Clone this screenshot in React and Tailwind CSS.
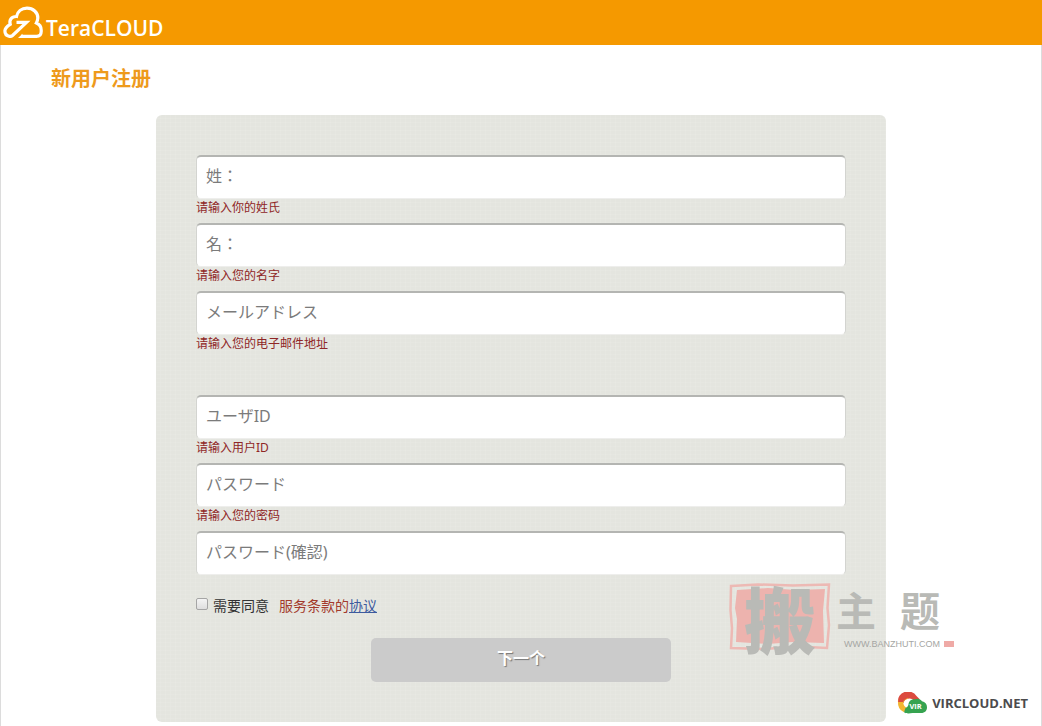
import React from "react";

const nameFields = [
  { id: "last-name", type: "text", label: "姓：", hint: "请输入你的姓氏" },
  { id: "first-name", type: "text", label: "名：", hint: "请输入您的名字" },
  { id: "email", type: "email", label: "メールアドレス", hint: "请输入您的电子邮件地址" },
];

const accountFields = [
  { id: "user-id", type: "text", label: "ユーザID", hint: "请输入用户ID" },
  { id: "password", type: "password", label: "パスワード", hint: "请输入您的密码" },
  { id: "password-confirm", type: "password", label: "パスワード(確認)" },
];

function Field({ id, type, label, hint }) {
  return (
    <div>
      <input
        id={id}
        type={type}
        lang="zh-TW"
        placeholder={label}
        aria-label={label}
        aria-describedby={hint ? id + "-hint" : undefined}
        className="block h-11 w-full rounded-[5px] border border-t-2 border-[#d3d4d0] border-t-[#b4b5b2] border-b-[#eeeeec] bg-white px-[9px] pb-[3px] font-['Noto_Sans','Noto_Sans_CJK_JP',sans-serif] text-base text-[#444] outline-none placeholder:text-[#7b7b7b]"
      />
      {hint && (
        <p id={id + "-hint"} className="h-6 text-xs leading-[18px] text-[#8f2626]">
          {hint}
        </p>
      )}
    </div>
  );
}

function CloudMark() {
  return (
    <svg viewBox="0 0 40 34" className="h-[34px] w-10" fill="none" stroke="#fff" strokeWidth="3.2" aria-hidden="true">
      <path d="M13.500 16.300H23.500L9.500 29.500C8.500 30.400 7.500 30.500 6.500 30.300C3.500 29.800 1.800 27.500 1.900 24.800C2 22 4 20.300 7.200 18.300C6 14 8.500 10.300 13.500 10.500C14.500 5.500 18.500 2.100 24 2.100C30 2.100 35 6.500 34.800 12C34.700 14 34.200 15.500 33.400 17C36.500 18.300 38.200 20.800 38.200 24V25.500C38.200 28.500 36.500 30.400 33.500 30.400H18" />
      <path d="M15 32L19.500 27.800V32Z" fill="#fff" stroke="none" />
    </svg>
  );
}

function VirMark() {
  return (
    <svg viewBox="0 0 31 22" className="h-[22px] w-[31px]" aria-hidden="true">
      <path d="M1 10A10 9.500 0 0 1 19.500 4L23 7.500L17 8.500A6 5.500 0 0 0 6.500 11Z" fill="#dc4b3f" />
      <path d="M1 10A10.500 10.500 0 0 0 7 20.300L10.500 16A6 6 0 0 1 6.300 11C6.500 8.500 9 6.500 11.500 7L9 4.500C4 5 1.500 7 1 10Z" fill="#f2b632" />
      <path d="M1 10A10 9.500 0 0 1 12 1.200L10 6.500C8 7 6.500 8.500 6 10Z" fill="#dc4b3f" />
      <path d="M7 20.300C9 21.700 12 21.700 15.500 21H24C28 21 30 18.500 30 15.200C30 12 28 9.700 25 9.200C23.500 6.700 20.500 6 18 7.200C14.500 6.800 11.500 9 11.500 12.500C11 14.500 10 15.500 8.500 16Z" fill="#36a350" />
      <text x="12.500" y="16.500" fontSize="7.500" fontWeight="700" fontFamily="Open Sans, sans-serif" fill="#fff">VIR</text>
    </svg>
  );
}

function ThemeWatermark() {
  return (
    <div className="pointer-events-none absolute top-[580px] left-[728px] flex text-[#b9bab6]" aria-hidden="true">
      <div className="relative flex h-[74px] w-[104px] items-center justify-center">
        <svg viewBox="0 -3 104 74" className="absolute inset-0 h-full w-full">
          <path d="M3 3L30 1.500L65 2.500L101 1.500L99.500 25L101 42L99 65L70 63.500L36 66L3 65L4 45L2.500 27Z" fill="none" stroke="#edb9b4" strokeWidth="2.500" />
          <path d="M9 7L40 5L68 7L97 6L95 28L96 60L65 59L40 61L8 59L9 36L7 25Z" fill="#edb3ae" />
        </svg>
        <span className="relative font-['Noto_Sans_CJK_SC',sans-serif] text-[72px] leading-none font-black">搬</span>
      </div>
      <div className="flex flex-col pl-1">
        <span className="flex gap-6 font-['Noto_Sans_CJK_SC',sans-serif] text-[40px] leading-[58px] font-bold">
          <span>主</span>
          <span>题</span>
        </span>
        <span className="flex items-center gap-1 pl-2 font-['Liberation_Sans',sans-serif] text-[9px] leading-3 text-[#a5a6a3]">
          WWW.BANZHUTI.COM
          <i className="h-[6px] w-[10px] bg-[#efaaa6]" />
        </span>
      </div>
    </div>
  );
}

export default function App() {
  return (
    <div className="relative flex min-h-screen flex-col bg-white font-['Noto_Sans','Noto_Sans_CJK_SC',sans-serif]">
      <header className="flex h-[45px] items-center bg-[#f59900] pl-[3px]">
        <a href="#" className="flex items-center gap-[3px] text-white" aria-label="TeraCLOUD">
          <CloudMark />
          <span className="pt-[10px] font-['Open_Sans',sans-serif] text-[21px] leading-7 font-semibold">TeraCLOUD</span>
        </a>
      </header>

      <main className="flex-1 border-x border-[#dcdcdc] pt-[19px]">
        <h1 className="pl-[50px] text-xl leading-[30px] font-bold text-[#ee9a1c]">新用户注册</h1>

        <form
          lang="zh-CN"
          onSubmit={(e) => e.preventDefault()}
          className="mx-auto mt-[21px] w-full max-w-[730px] rounded-[6px] bg-[#e4e5df] bg-[repeating-linear-gradient(0deg,#0000_0_3px,#ffffff12_3px_4px),repeating-linear-gradient(90deg,#0000_0_4px,#ffffff12_4px_5px)] p-10"
        >
          {nameFields.map((f) => (
            <Field key={f.id} {...f} />
          ))}
          <div className="pt-9">
            {accountFields.map((f) => (
              <Field key={f.id} {...f} />
            ))}
          </div>

          <div className="mt-5 flex h-[22px] items-center text-sm text-[#333]">
            <input
              id="agree"
              type="checkbox"
              className="mr-[5px] mb-1 size-3 appearance-none rounded-[2px] border border-[#a5a5a5] bg-linear-to-b from-[#f4f4f4] to-[#dedede] checked:bg-[#2f5fa8]"
            />
            <label htmlFor="agree">需要同意</label>
            <span className="ml-[10px] text-[#a33a2c]">服务条款的</span>
            <a href="#" className="text-[#3c5a9e] underline">协议</a>
          </div>

          <button
            type="submit"
            className="mx-auto mt-[21px] block h-11 w-full max-w-[300px] rounded-[5px] bg-[#cbcbcb] pb-1 text-base font-bold text-white [text-shadow:1px_1px_1px_#777]"
          >
            下一个
          </button>
        </form>
      </main>

      <ThemeWatermark />
      <div className="pointer-events-none absolute right-[14px] bottom-[12px] flex items-center gap-1">
        <VirMark />
        <span className="font-['Open_Sans',sans-serif] text-[13px] leading-5 font-bold text-[#4b4b4d]">VIRCLOUD.NET</span>
      </div>
    </div>
  );
}
